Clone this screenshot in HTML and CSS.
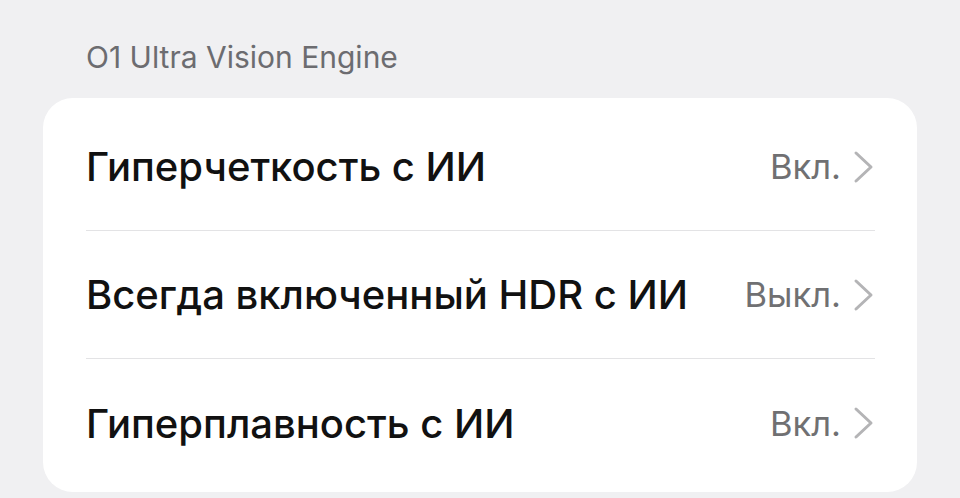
FILE: index.html
```html
<!DOCTYPE html>
<html lang="ru">
<head>
<meta charset="utf-8">
<link rel="stylesheet" href="styles.css">
</head>
<body>
<div class="page">
  <div class="section-title">O1 Ultra Vision Engine</div>
  <div class="card">
    <div class="row">
      <span class="label">Гиперчеткость с ИИ</span>
      <span class="value">Вкл.<svg class="chev" viewBox="0 0 22 34"><path d="M3 3 L18 17 L3 31"/></svg></span>
    </div>
    <div class="row">
      <span class="label">Всегда включенный HDR с ИИ</span>
      <span class="value">Выкл.<svg class="chev" viewBox="0 0 22 34"><path d="M3 3 L18 17 L3 31"/></svg></span>
    </div>
    <div class="row last">
      <span class="label">Гиперплавность с ИИ</span>
      <span class="value">Вкл.<svg class="chev" viewBox="0 0 22 34"><path d="M3 3 L18 17 L3 31"/></svg></span>
    </div>
  </div>
</div>
</body>
</html>
```
FILE: styles.css
```css
html, body {
  margin: 0;
  padding: 0;
  background: #f0f0f2;
}
.page {
  width: 960px;
  height: 498px;
  overflow: hidden;
  font-family: Inter, "Liberation Sans", Arial, sans-serif;
}
.section-title {
  height: 98px;
  box-sizing: border-box;
  padding: 39px 0 0 86px;
  font-size: 30px;
  line-height: 36px;
  color: #6c6c70;
}
.card {
  margin: 0 43px;
  background: #ffffff;
  border-radius: 30px;
  padding: 5px 42px 5px 43px;
}
.row {
  height: 128px;
  display: flex;
  align-items: center;
  justify-content: space-between;
  border-bottom: 1px solid #e3e3e5;
  box-sizing: border-box;
}
.row.last {
  border-bottom: none;
}
.label {
  font-size: 40px;
  font-weight: 500;
  color: #111111;
}
.value {
  display: flex;
  align-items: center;
  font-size: 34.5px;
  color: #707072;
}
.chev {
  width: 22px;
  height: 34px;
  margin-left: 12px;
  fill: none;
  stroke: #b4b4b6;
  stroke-width: 3;
  stroke-linecap: round;
  stroke-linejoin: round;
}
```
